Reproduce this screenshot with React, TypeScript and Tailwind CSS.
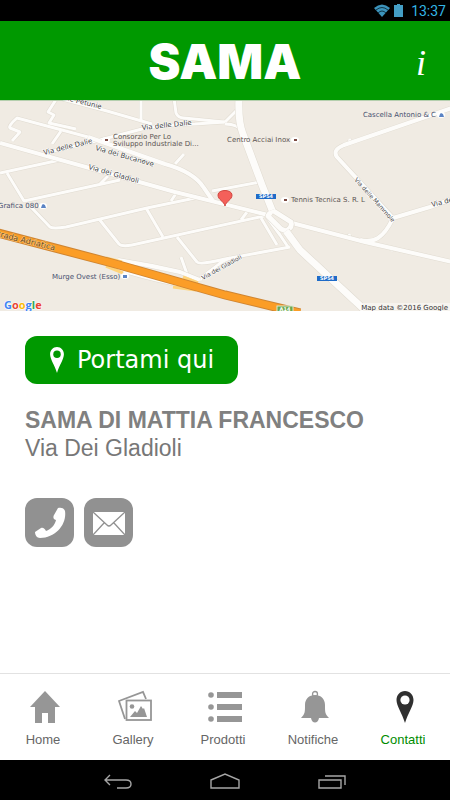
import type { ReactNode } from "react";

const minorRoads = [
  "M58 -2 L107 11 L152 24",
  "M141 0 V20",
  "M174 -2 L176 13 Q178 18 184 18 L224 22",
  "M44 53 L92 42 L142 29 Q158 25 195 24 L225 22",
  "M12 41 L20 32 L10 28 Q8 26 17 18 L88 37",
  "M57 -2 L48 12 L54 15 L49 23 L76 29",
  "M61 31 L52 44",
  "M0 73 L60 60",
  "M7 73 L24 101 L120 80",
  "M100 84 L108 76",
  "M175 64 L184 54",
  "M171 101 L177 92",
  "M212 91 L260 82",
  "M30 106 L50 127 Q53 129 66 127 L147 108 L200 97",
  "M99 119 L119 144 Q122 147 132 145 L264 116",
  "M146 108 L163 137",
  "M177 137 L197 162 Q200 165 225 159 L290 147",
  "M181 157 L187 174 Q192 181 202 179",
  "M198 180 L218 165 Q222 161 230 158",
  "M261 118 L277 145",
  "M267 117 L280 135 L288 147",
  "M241 120 L247 112",
  "M225 22 L237 10",
  "M225 24 Q238 24 243 32",
  "M349 39 L352 43",
  "M350 134 L348 138",
  "M394 147 L391 151",
];

const streets = [
  "M88 37 L165 64 Q194 72 204 88 L213 101",
  "M0 43 L175 92 L268 115",
  "M452 8 L344 45 Q332 50 337 57 L393 118 Q386 133 378 138 Q370 143 360 140",
  "M393 118 L430 107 L452 99",
  "M292 123 L365 142 L452 162",
  "M118 160 Q150 165 180 172 L200 180",
  "M112 166 Q130 175 200 189",
];

const highways = [
  "M239 -2 Q238 22 243 34 L262 85 L272 110",
  "M286 131 L300 150 L368 213",
];

const roundabout = ["M272 110 L291 122 Q293 127 286 131 L281 129 L268 116 Z"];

interface RoadsProps {
  paths: string[];
  width: number;
}

function Roads({ paths, width }: RoadsProps) {
  return (
    <g fill="none" strokeLinejoin="round">
      {paths.map((d) => (
        <path key={`edge-${d}`} d={d} stroke="#e0dbd1" strokeWidth={width + 1} />
      ))}
      {paths.map((d) => (
        <path key={d} d={d} stroke="#fdfcfa" strokeWidth={width} />
      ))}
    </g>
  );
}

function Pin({ className, hole }: { className: string; hole: string }) {
  return (
    <svg viewBox="0 0 18 32" className={className} aria-hidden="true">
      <path d="M9 0 C4 0 0.5 4 0.5 9 C0.5 15 6 22 9 32 C12 22 17.5 15 17.5 9 C17.5 4 14 0 9 0 Z" fill="currentColor" />
      <circle cx="9" cy="9" r="4.6" fill={hole} />
    </svg>
  );
}

function LocationMap() {
  return (
    <svg viewBox="0 0 450 211" className="block h-auto w-full bg-[#f0ebe3]" role="img" aria-label="Mappa di Via Dei Gladioli">
      <Roads paths={minorRoads} width={3} />
      <Roads paths={streets} width={4} />
      <Roads paths={roundabout} width={5} />
      <Roads paths={highways} width={7} />
      <path d="M0 0 H450" stroke="#b5cfae" strokeWidth="2" />

      <g stroke="#ffd37a" strokeWidth="3">
        <path d="M106 158 L122 162" />
        <path d="M106 166 L123 173" />
        <path d="M183 177 L198 183" />
        <path d="M173 187 L196 190" />
      </g>
      <path d="M-2 133 L112 163 L225 195 L300 213" fill="none" stroke="#cf8532" strokeWidth="9" />
      <path d="M-2 133 L112 163 L225 195 L300 213" fill="none" stroke="#fb9d27" strokeWidth="7" />

      <g fontFamily="'DejaVu Sans', sans-serif" fontSize="7" fill="#3f3f3f" stroke="#ffffff" strokeWidth="1" paintOrder="stroke">
        <text transform="translate(57 -2) rotate(14)">delle Petunie</text>
        <text transform="translate(142 30) rotate(-6)">Via delle Dalie</text>
        <text transform="translate(44 55) rotate(-14)">Via delle Dalie</text>
        <text transform="translate(95 50) rotate(16)">Via dei Bucaneve</text>
        <text transform="translate(88 69) rotate(16)">Via dei Gladioli</text>
        <text transform="translate(203 180) rotate(-29)" fontSize="6">Via dei Gladioli</text>
        <text transform="translate(354 80) rotate(48)" fontSize="6">Via delle Mammole</text>
        <text transform="translate(432 107) rotate(-14)">Via dei</text>
      </g>
      <text transform="translate(-8 135) rotate(14)" fontFamily="'DejaVu Sans', sans-serif" fontSize="8" fill="#6b4a1c" stroke="#ffc77b" strokeWidth="1" paintOrder="stroke">
        Strada Adriatica
      </text>

      <g fontFamily="'DejaVu Sans', sans-serif" fontSize="7" fill="#5c5552">
        <text x="113" y="39">Consorzio Per Lo</text>
        <text x="113" y="46">Sviluppo Industriale Di...</text>
        <text x="227" y="42">Centro Acciai Inox</text>
        <text x="291" y="102">Tennis Tecnica S. R. L</text>
      </g>
      <g fontFamily="'DejaVu Sans', sans-serif" fontSize="7" fill="#47506f">
        <text x="436" y="17" textAnchor="end">Cascella Antonio &amp; C</text>
        <text x="-2" y="108">Grafica 080</text>
        <text x="52" y="179">Murge Ovest (Esso)</text>
      </g>

      <g fill="#ffffff">
        <ellipse cx="106" cy="40" rx="4" ry="3" />
        <ellipse cx="295" cy="40" rx="4" ry="3" />
        <ellipse cx="285" cy="100" rx="4" ry="3" />
        <ellipse cx="441" cy="15" rx="4" ry="3" />
        <ellipse cx="43" cy="106" rx="4" ry="3" />
        <ellipse cx="125" cy="176" rx="4" ry="3" />
      </g>
      <g fill="#7c4a42">
        <rect x="105" y="39" width="3" height="2" />
        <rect x="294" y="39" width="3" height="2" />
        <rect x="284" y="99" width="3" height="2" />
      </g>
      <g fill="#5b83c4">
        <path d="M439 17 L440 14 L441 13 L443 14 L444 17 Z" />
        <path d="M41 108 L42 105 L43 104 L45 105 L46 108 Z" />
        <rect x="123" y="175" width="4" height="3" />
      </g>

      <g fontFamily="'DejaVu Sans', sans-serif" fontSize="5" fontWeight="bold" fill="#ffffff" textAnchor="middle">
        <rect x="256" y="94" width="20" height="5" fill="#1e6bc8" />
        <text x="266" y="98">SP54</text>
        <rect x="317" y="176" width="20" height="5" fill="#1e6bc8" />
        <text x="327" y="180">SP54</text>
        <rect x="277" y="206" width="16" height="6" fill="#6aa84f" stroke="#d9ead3" />
        <text x="285" y="211">A14</text>
      </g>

      <path d="M225 106 C224 101 218 100 218 95 C218 89 232 89 232 95 C232 100 226 101 225 106 Z" fill="#f4605a" stroke="#d2453f" />

      <text x="4" y="209" fontFamily="'Open Sans', sans-serif" fontSize="11" fontWeight="bold" stroke="#ffffff" strokeWidth="1" paintOrder="stroke">
        <tspan fill="#4285f4">G</tspan>
        <tspan fill="#ea4335">o</tspan>
        <tspan fill="#fbbc05">o</tspan>
        <tspan fill="#4285f4">g</tspan>
        <tspan fill="#34a853">l</tspan>
        <tspan fill="#ea4335">e</tspan>
      </text>
      <rect x="363" y="203" width="87" height="8" fill="#f7f4ef" />
      <text x="448" y="210" textAnchor="end" fontFamily="'DejaVu Sans', sans-serif" fontSize="7" fill="#333333">
        Map data ©2016 Google
      </text>
    </svg>
  );
}

function StatusBar() {
  return (
    <div className="flex h-[21px] items-center justify-end gap-1 bg-black pr-1 text-[#33b5e5]">
      <svg viewBox="0 0 16 13" className="h-[13px] w-4" aria-hidden="true">
        <path d="M0 4 Q8 -3 16 4 L8 13 Z" fill="#3c93bb" />
        <path d="M2 6 Q8 1 14 6 M4 9 Q8 5 12 9" fill="none" stroke="#0b2a38" strokeWidth="0.9" />
      </svg>
      <svg viewBox="0 0 9 13" className="h-[13px] w-[9px]" fill="#449ec5" aria-hidden="true">
        <path d="M3 0 H6 V1 H9 V13 H0 V1 H3 Z" />
      </svg>
      <span className="ml-1 font-['Roboto',sans-serif] text-[14px] leading-5">13:37</span>
    </div>
  );
}

function HomeIcon() {
  return (
    <svg viewBox="0 0 32 34" className="h-[34px] w-8" fill="currentColor" aria-hidden="true">
      <path d="M16 1 L31 17 H26 V33 H19 V23 H13 V33 H6 V17 H1 Z" />
    </svg>
  );
}

function GalleryIcon() {
  return (
    <svg viewBox="0 0 34 34" className="h-[34px] w-[34px]" fill="none" stroke="currentColor" strokeWidth="1.8" aria-hidden="true">
      <path d="M28 9 L25 2 L1 11 L7 29" />
      <rect x="8.5" y="10.5" width="24.5" height="19.5" />
      <circle cx="14" cy="16.5" r="2.3" fill="currentColor" stroke="none" />
      <path d="M12 27 L17 21 L19 23 L23 16 L25 19 L26 18 L29 27 Z" fill="currentColor" stroke="none" />
    </svg>
  );
}

function ListIcon() {
  return (
    <svg viewBox="0 0 34 34" className="h-[34px] w-[34px]" fill="currentColor" aria-hidden="true">
      <circle cx="3" cy="5" r="2.8" />
      <circle cx="3" cy="17" r="2.8" />
      <circle cx="3" cy="29" r="2.8" />
      <path d="M9 2 H34 V8 H9 Z M9 14 H34 V20 H9 Z M9 26 H34 V32 H9 Z" />
    </svg>
  );
}

function BellIcon() {
  return (
    <svg viewBox="0 0 30 34" className="h-[34px] w-[30px]" fill="currentColor" aria-hidden="true">
      <circle cx="15" cy="4" r="2.5" fill="none" stroke="currentColor" strokeWidth="1.3" />
      <path d="M15 5 C9 5 5 9 5 15 C5 22 5 24 1 28 H11 C12 34 18 34 19 28 H29 C25 24 25 22 25 15 C25 9 21 5 15 5 Z" />
    </svg>
  );
}

interface TabProps {
  label: string;
  icon: ReactNode;
  active?: boolean;
}

function Tab({ label, icon, active = false }: TabProps) {
  return (
    <a href="#" aria-current={active ? "page" : undefined} className="flex flex-col items-center gap-2 pt-4 text-[#969696]">
      {icon}
      <span className={`pr-1 text-[13px] leading-4 ${active ? "text-[#008c00]" : "text-[#666666]"}`}>{label}</span>
    </a>
  );
}

export default function App() {
  return (
    <div className="flex min-h-screen flex-col bg-white font-['Liberation_Sans',Arial,sans-serif]">
      <StatusBar />

      <header className="grid h-[79px] grid-cols-[1fr_auto_1fr] items-center bg-[#009900] text-white">
        <h1 className="col-start-2 pt-0.5 font-['Inter',sans-serif] text-[48px] leading-[60px] font-black">SAMA</h1>
        <button type="button" aria-label="Informazioni" className="mt-1 mr-6 justify-self-end font-['Liberation_Serif',serif] text-[36px] leading-10 italic">
          i
        </button>
      </header>

      <LocationMap />

      <main className="flex-1 px-[25px] pt-[25px]">
        <button type="button" className="flex h-12 items-center gap-3 rounded-xl bg-[#009900] px-6 font-['DejaVu_Sans',Verdana,sans-serif] text-[24px] text-white">
          <Pin className="h-[26px] w-4" hole="#009900" />
          Portami qui
        </button>

        <div className="mt-[22px] text-[23px] leading-[28px]">
          <h2 className="font-bold text-[#808080]">SAMA DI MATTIA FRANCESCO</h2>
          <p className="text-[#777777]">Via Dei Gladioli</p>
        </div>

        <div className="mt-9 flex gap-[10px]">
          <a href="#" aria-label="Telefono" className="flex size-[49px] items-center justify-center rounded-xl bg-[#919191]">
            <svg viewBox="0 0 32 32" className="size-8" fill="#ffffff" aria-hidden="true">
              <path d="M24 1 C27 0 30 1 31 4 C33 17 22 31 6 31 C3 31 1 28 1 25 L7 21 C9 20 11 22 12 24 C17 22 21 18 22 13 C19 12 19 10 20 8 Z" />
            </svg>
          </a>
          <a href="#" aria-label="E-mail" className="flex size-[49px] items-center justify-center rounded-xl bg-[#919191]">
            <svg viewBox="0 0 34 24" className="h-6 w-[34px]" fill="none" stroke="#919191" strokeWidth="1.3" aria-hidden="true">
              <rect x="1" y="1" width="32" height="23" rx="1" fill="#ffffff" stroke="none" />
              <path d="M1 1 L15 14 Q17 16 19 14 L33 1 M1 24 L12 12 M33 24 L22 12" />
            </svg>
          </a>
        </div>
      </main>

      <nav className="grid h-[87px] grid-cols-5 border-t border-[#e2e2e2]">
        <Tab label="Home" icon={<HomeIcon />} />
        <Tab label="Gallery" icon={<GalleryIcon />} />
        <Tab label="Prodotti" icon={<ListIcon />} />
        <Tab label="Notifiche" icon={<BellIcon />} />
        <Tab label="Contatti" icon={<Pin className="h-[34px] w-[18px] text-[#303030]" hole="#ffffff" />} active />
      </nav>

      <div className="flex h-10 items-center justify-center gap-[78px] bg-black pt-1 text-[#a6a6a6]">
        <button type="button" aria-label="Indietro">
          <svg viewBox="0 0 28 18" className="block h-[18px] w-7" fill="none" stroke="currentColor" strokeWidth="1.4" aria-hidden="true">
            <path d="M6 2 L1 7 L6 12 M1 7 H22 Q27 7 27 11 Q27 15 22 15 H13" />
          </svg>
        </button>
        <button type="button" aria-label="Schermata principale">
          <svg viewBox="0 0 30 18" className="block h-[18px] w-[30px]" fill="none" stroke="currentColor" strokeWidth="1.4" aria-hidden="true">
            <path d="M1 7 L15 1 L29 7 V15 H1 Z" />
          </svg>
        </button>
        <button type="button" aria-label="App recenti">
          <svg viewBox="0 0 28 18" className="block h-[18px] w-7" fill="none" stroke="currentColor" strokeWidth="1.4" aria-hidden="true">
            <path d="M1 7 H23 V15 H1 Z M7 3 H27 V12" />
          </svg>
        </button>
      </div>
    </div>
  );
}
